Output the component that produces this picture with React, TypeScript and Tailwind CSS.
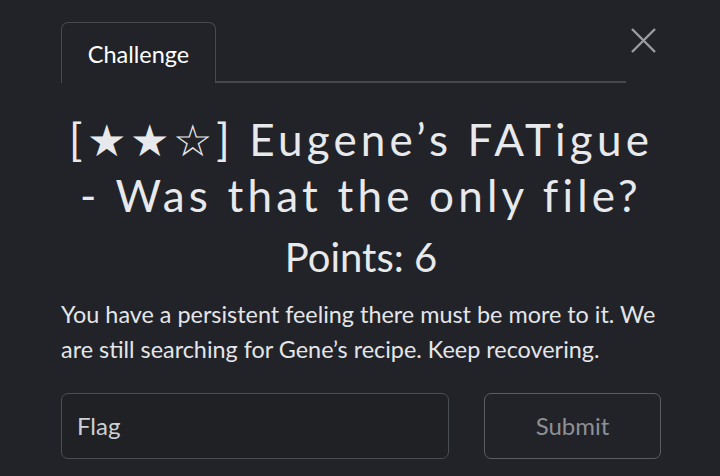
const App = () => {
  return (
    <div className="w-[720px] h-[476px] overflow-hidden bg-[#212328] font-['Lato','Noto_Sans',sans-serif] text-[#e8e9ec]">
      <div className="pl-[61px] pr-[59px] pt-[22px]">
        {/* Tabs */}
        <div className="flex items-end">
          <div className="w-[155px] h-[61px] pt-[3px] border border-b-0 border-[#46494e] rounded-t-[7px] flex items-center justify-center text-[23.5px] text-white">
            Challenge
          </div>
          <div className="flex-1 border-b-2 border-[#46494e]" />
          <button className="w-[35px] h-[60px] flex items-start justify-start pl-[5px] pt-[5px]">
            <svg width="25" height="25" viewBox="0 0 25 25" fill="none" stroke="#9b9da1" strokeWidth="2.4">
              <path d="M1 1 L24 24 M24 1 L1 24" />
            </svg>
          </button>
        </div>

        {/* Title */}
        <h3 className="mt-[28px] text-center text-[44px] leading-[56px] tracking-[4.2px]">
          [★★☆] Eugene’s FATigue - Was that the only file?
        </h3>
        <div className="mt-[10px] text-center text-[40px] leading-[48px]">Points: 6</div>

        {/* Description */}
        <p className="mt-[16px] -mr-[2px] text-[23.4px] leading-[35px] text-[#e4e5e8]">
          You have a persistent feeling there must be more to it. We are still searching for Gene’s recipe. Keep recovering.
        </p>

        {/* Flag form */}
        <div className="mt-[26px] flex items-center">
          <div className="w-[388px] h-[66px] border border-[#4a4d52] rounded-[7px] bg-[#1f2125] flex items-center px-[15px] text-[24px] text-[#cfd0d3]">
            Flag
          </div>
          <button className="ml-auto w-[177px] h-[66px] border border-[#5a5d62] rounded-[7px] text-[24px] text-[#8d9095]">
            Submit
          </button>
        </div>
      </div>
    </div>
  );
};

export default App;
